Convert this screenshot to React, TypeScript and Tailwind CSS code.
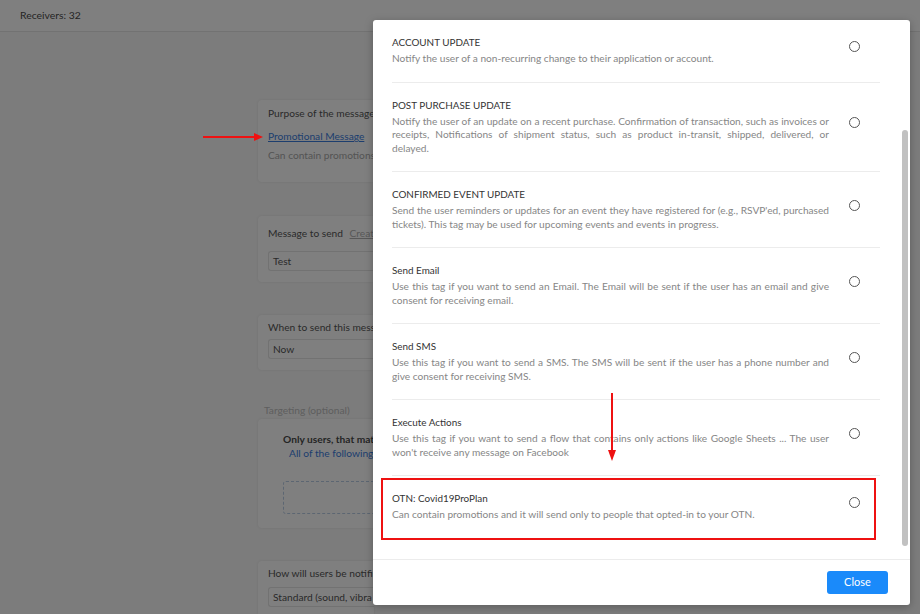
const options = [
  {
    title: 'ACCOUNT UPDATE',
    desc: 'Notify the user of a non-recurring change to their application or account.',
  },
  {
    title: 'POST PURCHASE UPDATE',
    desc: 'Notify the user of an update on a recent purchase. Confirmation of transaction, such as invoices or receipts, Notifications of shipment status, such as product in-transit, shipped, delivered, or delayed.',
  },
  {
    title: 'CONFIRMED EVENT UPDATE',
    desc: "Send the user reminders or updates for an event they have registered for (e.g., RSVP'ed, purchased tickets). This tag may be used for upcoming events and events in progress.",
  },
  {
    title: 'Send Email',
    desc: 'Use this tag if you want to send an Email. The Email will be sent if the user has an email and give consent for receiving email.',
  },
  {
    title: 'Send SMS',
    desc: 'Use this tag if you want to send a SMS. The SMS will be sent if the user has a phone number and give consent for receiving SMS.',
  },
  {
    title: 'Execute Actions',
    desc: "Use this tag if you want to send a flow that contains only actions like Google Sheets ... The user won't receive any message on Facebook",
  },
  {
    title: 'OTN: Covid19ProPlan',
    desc: 'Can contain promotions and it will send only to people that opted-in to your OTN.',
  },
];

export default function App() {
  return (
    <div className="relative h-[614px] w-[920px] overflow-hidden bg-[#f8f8f8] font-['Lato',sans-serif]">
      {/* Page under the dialog */}
      <div className="flex h-[32px] items-center border-b border-[#e4e4e4] bg-white px-5 text-[10.4px] text-[#4a4a4a]">
        Receivers: 32
      </div>

      <div className="ml-[258px] w-[116px] pt-[68px] text-[10.2px] leading-[14px] whitespace-nowrap text-[#555]">
        <div className="overflow-hidden rounded-l-[4px] bg-white px-[10px] pt-[6px] pb-[20px] shadow-[0_0_3px_rgba(0,0,0,0.08)]">
          <div>Purpose of the message</div>
          <div className="mt-[9px]">
            <span className="text-[#3b7ddd] underline">Promotional Message</span>
          </div>
          <div className="mt-[5px] text-[#a8a8a8]">Can contain promotions</div>
        </div>

        <div className="mt-[34px] overflow-hidden rounded-l-[4px] bg-white pt-[10px] pb-[11px] pl-[10px] shadow-[0_0_3px_rgba(0,0,0,0.08)]">
          <div>
            Message to send <span className="ml-1 text-[#b0b0b0] underline">Creat</span>
          </div>
          <div className="mt-[11px] flex h-[20px] items-center rounded-l-[3px] border border-r-0 border-[#e4e4e4] px-[4px]">Test</div>
        </div>

        <div className="mt-[33px] overflow-hidden rounded-l-[4px] bg-white pt-[5px] pb-[11px] pl-[10px] shadow-[0_0_3px_rgba(0,0,0,0.08)]">
          <div>When to send this mess</div>
          <div className="mt-[5px] flex h-[20px] items-center rounded-l-[3px] border border-r-0 border-[#e4e4e4] px-[4px]">Now</div>
        </div>

        <div className="mt-[33px] pl-[6px] text-[#bdbdbd]">Targeting (optional)</div>

        <div className="mt-[2px] h-[109px] overflow-hidden rounded-l-[4px] bg-white pt-[13px] shadow-[0_0_3px_rgba(0,0,0,0.08)]">
          <div className="pl-[25px] font-bold text-[#4a4a4a]">Only users, that mat</div>
          <div className="pl-[31px] text-[#3b7ddd]">All of the following</div>
          <div className="mt-[21px] ml-[25px] h-[33px] w-[200px] rounded-[3px] border border-dashed border-[#b9cde4]" />
        </div>

        <div className="mt-[33px] overflow-hidden rounded-l-[4px] bg-white pt-[5px] pb-[11px] pl-[10px] shadow-[0_0_3px_rgba(0,0,0,0.08)]">
          <div>How will users be notifi</div>
          <div className="mt-[7px] flex h-[20px] items-center rounded-l-[3px] border border-r-0 border-[#e4e4e4] px-[4px]">
            Standard (sound, vibra
          </div>
        </div>
      </div>

      {/* Backdrop */}
      <div className="absolute inset-0 bg-black/50" />

      {/* Dialog */}
      <div className="absolute top-[20px] left-[373px] flex h-[585px] w-[537px] flex-col rounded-[3px] bg-white shadow-[0_2px_8px_rgba(0,0,0,0.25)]">
        <div className="relative flex-1 overflow-hidden pr-[30px] pl-[19px]">
          {options.map((o, i) => (
            <div
              key={o.title}
              className={
                'flex items-center justify-between pt-[15px] pb-[16px] ' +
                (i < options.length - 1 ? 'border-b border-[#ececec]' : '')
              }
            >
              <div className="w-[437px]">
                <div className="text-[9.9px] leading-[15px] text-[#333]">{o.title}</div>
                <div className="mt-[2px] text-justify text-[10.15px] leading-[13.5px] text-[#868686]">{o.desc}</div>
              </div>
              <div className="mr-[20px] -mt-[7px] h-[11px] w-[11px] shrink-0 rounded-full border-[1.5px] border-[#555]" />
            </div>
          ))}
          {/* scrollbar */}
          <div className="absolute top-[110px] right-[2px] h-[416px] w-[6px] rounded-full bg-[#c1c1c1]" />
        </div>
        <div className="flex h-[46px] items-center justify-end border-t border-[#ececec] pr-[22px]">
          <button className="h-[23px] w-[61px] rounded-[3px] bg-[#1a8afa] text-[11px] text-white">Close</button>
        </div>
      </div>

      {/* Red annotations */}
      <svg className="absolute top-[130px] left-[200px]" width="66" height="14" viewBox="0 0 66 14">
        <line x1="3" y1="7" x2="56" y2="7" stroke="#ee1111" strokeWidth="2" />
        <polygon points="54,3 63,7 54,11" fill="#ee1111" />
      </svg>
      <svg className="absolute top-[390px] left-[605px]" width="14" height="74" viewBox="0 0 14 74">
        <line x1="7" y1="3" x2="7" y2="62" stroke="#ee1111" strokeWidth="2" />
        <polygon points="3,60 7,71 11,60" fill="#ee1111" />
      </svg>
      <div className="absolute top-[478px] left-[381px] h-[62px] w-[495px] border-2 border-[#ee1111]" />
    </div>
  );
}
